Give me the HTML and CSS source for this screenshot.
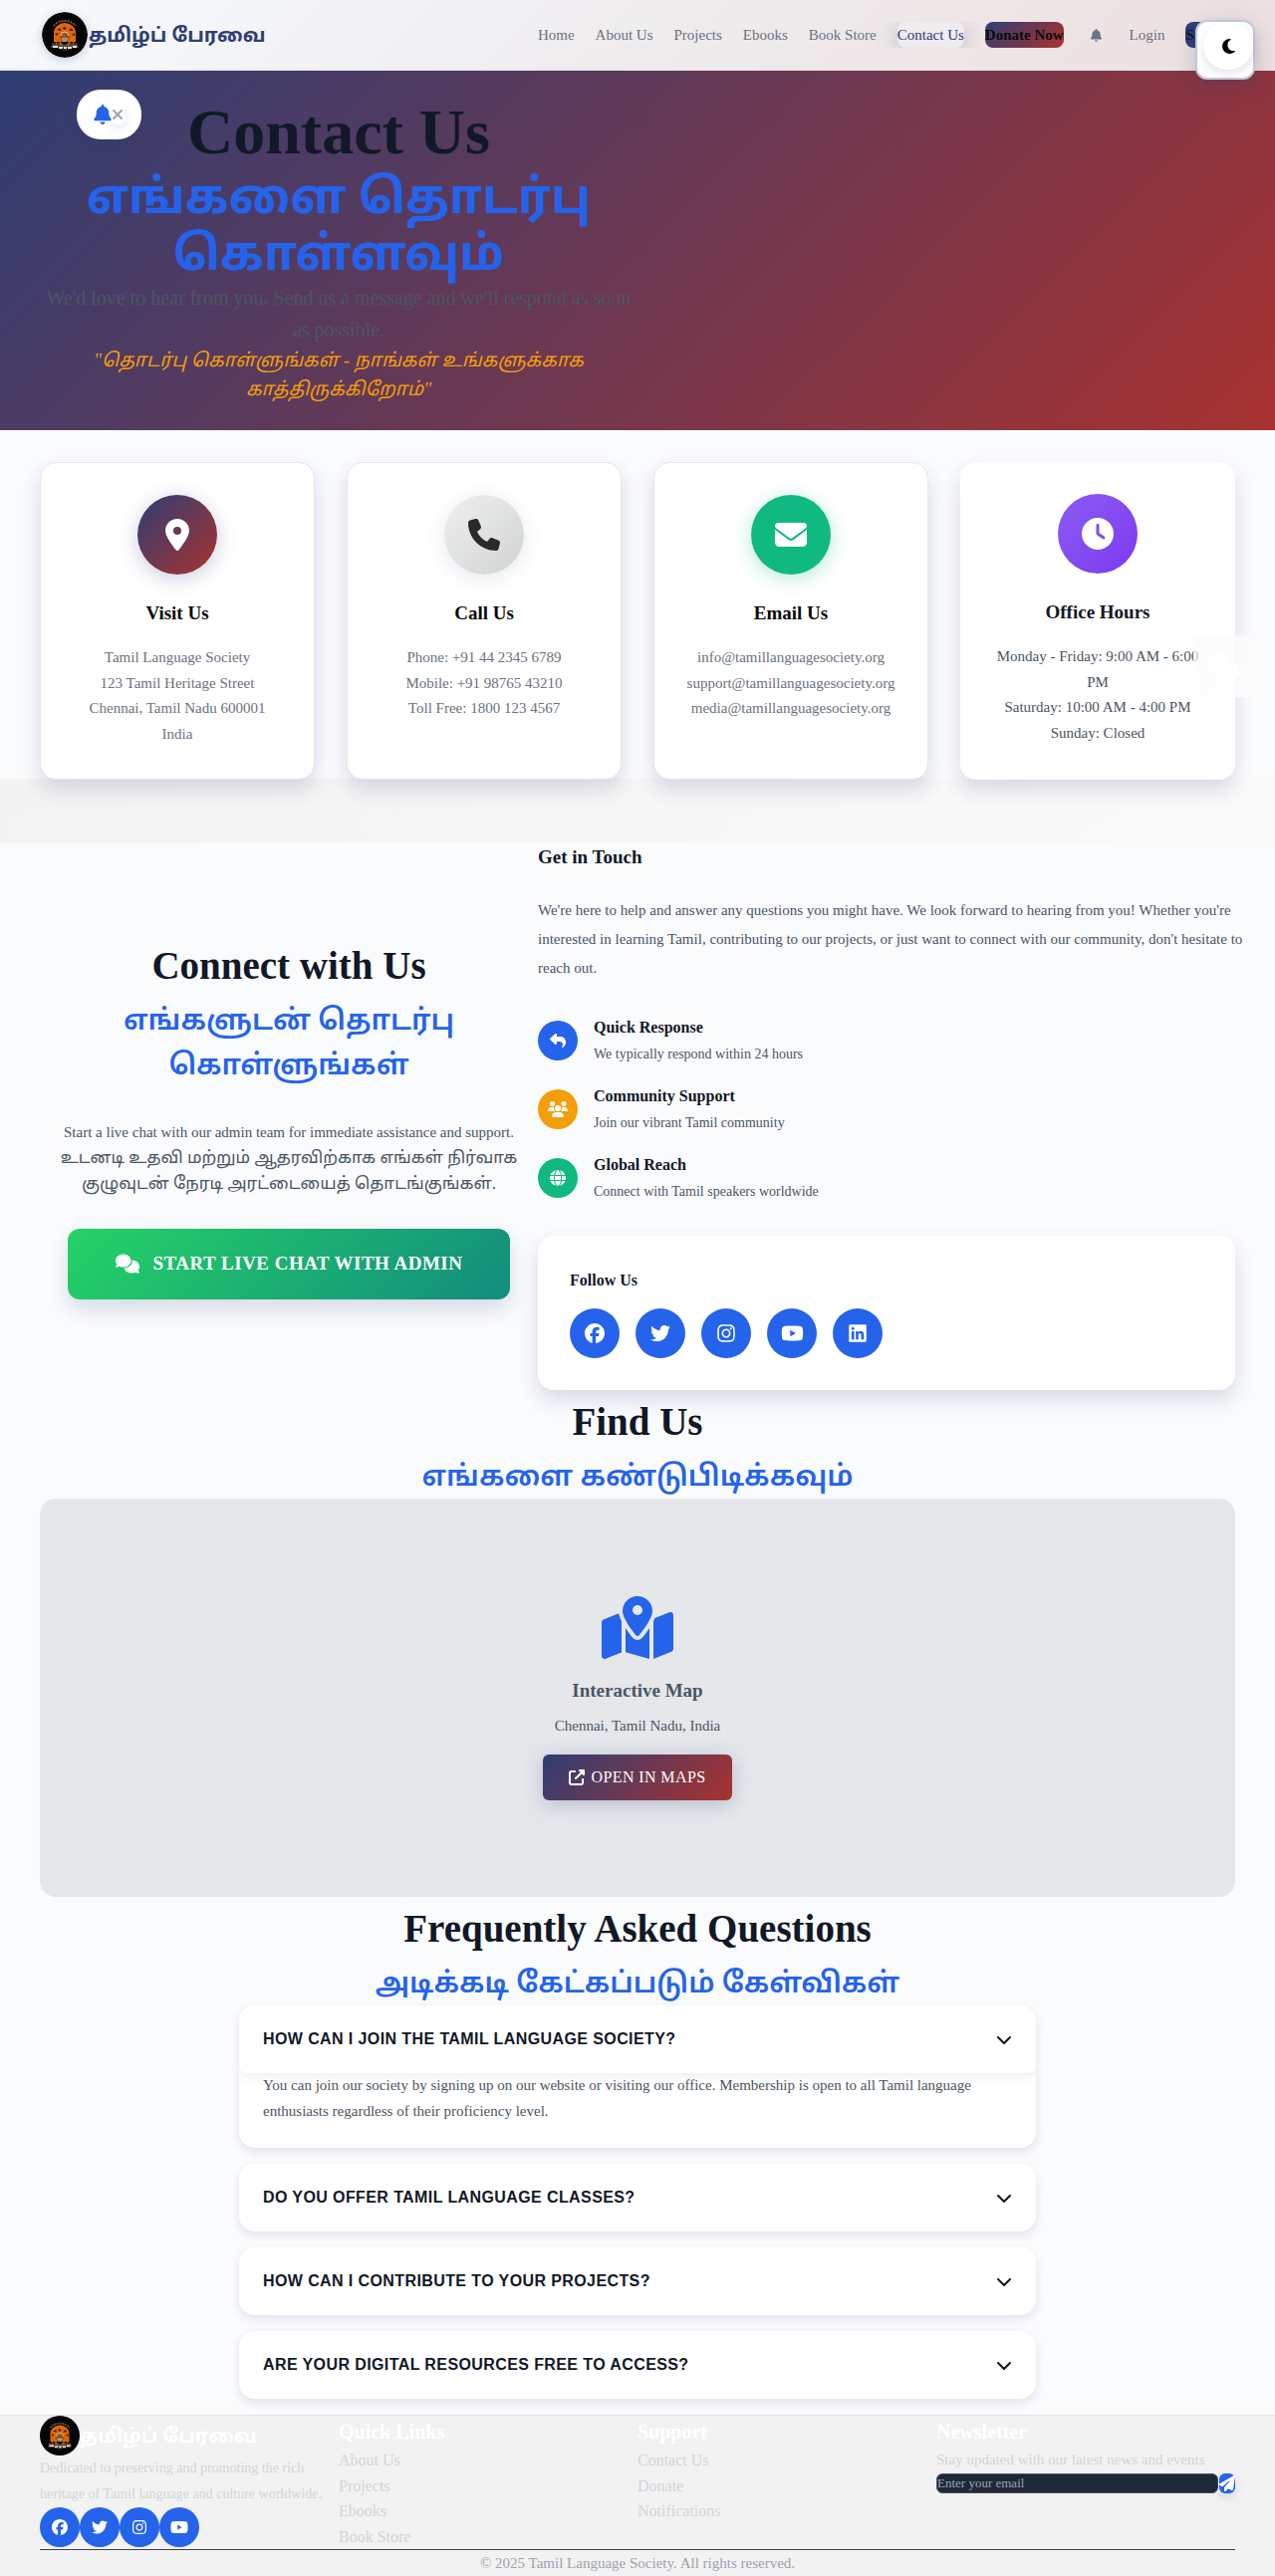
FILE: index.html
```html
<!DOCTYPE html>
<html lang="en">
<head>
<meta charset="utf-8">
<meta name="viewport" content="width=device-width, initial-scale=1">
<title>Contact Us - Tamil Language Society</title>
<link rel="stylesheet" href="styles.css">
</head>
<body>
<svg class="sprite" aria-hidden="true">
  <symbol id="bell" viewBox="0 0 448 512"><path d="M224 0c-17.7 0-32 14.3-32 32V51.2C119 66 64 130.6 64 208v18.8c0 47-17.3 92.4-48.5 127.6l-7.4 8.3c-8.4 9.4-10.4 22.9-5.3 34.4S19.4 416 32 416H416c12.6 0 24-7.4 29.2-18.9s3.1-25-5.3-34.4l-7.4-8.3C401.3 319.2 384 273.9 384 226.8V208c0-77.4-55-142-128-156.8V32c0-17.7-14.3-32-32-32zm45.3 493.3c12-12 18.7-28.3 18.7-45.3H224 160c0 17 6.7 33.3 18.7 45.3s28.3 18.7 45.3 18.7s33.3-6.7 45.3-18.7z"/></symbol>
  <symbol id="times" viewBox="0 0 384 512"><path d="M342.6 150.6c12.5-12.5 12.5-32.8 0-45.3s-32.8-12.5-45.3 0L192 210.7 86.6 105.4c-12.5-12.5-32.8-12.5-45.3 0s-12.5 32.8 0 45.3L146.7 256 41.4 361.4c-12.5 12.5-12.5 32.8 0 45.3s32.8 12.5 45.3 0L192 301.3 297.4 406.6c12.5 12.5 32.8 12.5 45.3 0s12.5-32.8 0-45.3L237.3 256 342.6 150.6z"/></symbol>
  <symbol id="moon" viewBox="0 0 384 512"><path d="M223.5 32C100 32 0 132.3 0 256S100 480 223.5 480c60.6 0 115.5-24.2 155.8-63.4c5-4.9 6.3-12.5 3.1-18.7s-10.1-9.7-17-8.5c-9.8 1.7-19.8 2.6-30.1 2.6c-96.9 0-175.5-78.8-175.5-176c0-65.8 36-123.1 89.3-153.3c6.1-3.5 9.2-10.5 7.7-17.3s-7.3-11.9-14.3-12.5c-6.3-.5-12.6-.8-19-.8z"/></symbol>
  <symbol id="pin" viewBox="0 0 384 512"><path d="M215.7 499.2C267 435 384 279.4 384 192C384 86 298 0 192 0S0 86 0 192c0 87.4 117 243 168.3 307.2c12.3 15.3 35.1 15.3 47.4 0zM192 128a64 64 0 1 1 0 128 64 64 0 1 1 0-128z"/></symbol>
  <symbol id="phone" viewBox="0 0 512 512"><path d="M164.9 24.6c-7.7-18.6-28-28.5-47.4-23.2l-88 24C12.1 30.2 0 46 0 64C0 311.4 200.6 512 448 512c18 0 33.8-12.1 38.6-29.5l24-88c5.3-19.4-4.6-39.7-23.2-47.4l-96-40c-16.3-6.8-35.2-2.1-46.3 11.6L304.7 368C234.3 334.7 177.3 277.7 144 207.3L193.3 167c13.7-11.2 18.4-30 11.6-46.3l-40-96z"/></symbol>
  <symbol id="envelope" viewBox="0 0 512 512"><path d="M48 64C21.5 64 0 85.5 0 112c0 15.1 7.1 29.3 19.2 38.4L236.8 313.6c11.4 8.5 27 8.5 38.4 0L492.8 150.4c12.1-9.1 19.2-23.3 19.2-38.4c0-26.5-21.5-48-48-48H48zM0 176V384c0 35.3 28.7 64 64 64H448c35.3 0 64-28.7 64-64V176L294.4 339.2c-22.8 17.1-54 17.1-76.8 0L0 176z"/></symbol>
  <symbol id="clock" viewBox="0 0 512 512"><path d="M256 0a256 256 0 1 1 0 512A256 256 0 1 1 256 0zM232 120V256c0 8 4 15.5 10.7 20l96 64c11 7.4 25.9 4.4 33.3-6.7s4.4-25.9-6.7-33.3L280 243.2V120c0-13.3-10.7-24-24-24s-24 10.7-24 24z"/></symbol>
  <symbol id="comments" viewBox="0 0 640 512"><path d="M208 352c114.9 0 208-78.8 208-176S322.9 0 208 0S0 78.8 0 176c0 38.6 14.7 74.3 39.6 103.4c-3.5 9.4-8.7 17.7-14.2 24.7c-4.8 6.2-9.7 11-13.3 14.3c-1.8 1.6-3.3 2.9-4.3 3.7c-.5 .4-.9 .7-1.1 .8l-.2 .2C1 327.2-1.4 334.4 .8 340.9S9.1 352 16 352c21.8 0 43.8-5.6 62.1-12.5c9.2-3.5 17.8-7.4 25.2-11.4C134.1 343.3 169.8 352 208 352zM448 176c0 112.3-99.1 196.9-216.5 207C255.8 457.4 336.4 512 432 512c38.2 0 73.9-8.7 104.7-23.9c7.5 4 16 7.9 25.2 11.4c18.3 6.9 40.3 12.5 62.1 12.5c6.9 0 13.1-4.5 15.2-11.1c2.1-6.6-.2-13.8-5.8-17.9l-.2-.2c-.2-.2-.6-.4-1.1-.8c-1-.8-2.5-2-4.3-3.7c-3.6-3.3-8.5-8.1-13.3-14.3c-5.5-7-10.7-15.4-14.2-24.7c24.9-29 39.6-64.7 39.6-103.4c0-92.8-84.9-168.9-192.6-175.5c.4 5.1 .6 10.3 .6 15.5z"/></symbol>
  <symbol id="reply" viewBox="0 0 512 512"><path d="M205 34.8c11.5 5.1 19 16.6 19 29.2v64H336c97.2 0 176 78.8 176 176c0 113.3-81.5 163.9-100.2 174.1c-2.5 1.4-5.3 1.9-8.1 1.9c-10.9 0-19.7-8.9-19.7-19.7c0-7.5 4.3-14.4 9.8-19.5c9.4-8.8 22.2-26.4 22.2-56.7c0-53-43-96-96-96H224v64c0 12.6-7.4 24.1-19 29.2s-25 3-34.4-5.4l-160-144C3.9 225.7 0 217.1 0 208s3.9-17.7 10.6-23.8l160-144c9.4-8.5 22.9-10.6 34.4-5.4z"/></symbol>
  <symbol id="users" viewBox="0 0 640 512"><path d="M144 0a80 80 0 1 1 0 160A80 80 0 1 1 144 0zM512 0a80 80 0 1 1 0 160A80 80 0 1 1 512 0zM0 298.7C0 239.8 47.8 192 106.7 192h42.7c15.9 0 31 3.5 44.6 9.7c-1.3 7.2-1.9 14.7-1.9 22.3c0 38.2 16.8 72.5 43.3 96c-.2 0-.4 0-.7 0H21.3C9.6 320 0 310.4 0 298.7zM405.3 320c-.2 0-.4 0-.7 0c26.6-23.5 43.3-57.8 43.3-96c0-7.6-.7-15-1.9-22.3c13.6-6.3 28.7-9.7 44.6-9.7h42.7C592.2 192 640 239.8 640 298.7c0 11.8-9.6 21.3-21.3 21.3H405.3zM224 224a96 96 0 1 1 192 0 96 96 0 1 1 -192 0zM128 485.3C128 411.7 187.7 352 261.3 352H378.7C452.3 352 512 411.7 512 485.3c0 14.7-11.9 26.7-26.7 26.7H154.7c-14.7 0-26.7-11.9-26.7-26.7z"/></symbol>
  <symbol id="globe" viewBox="0 0 512 512"><path d="M352 256c0 22.2-1.2 43.6-3.3 64H163.3c-2.2-20.4-3.3-41.8-3.3-64s1.2-43.6 3.3-64H348.7c2.2 20.4 3.3 41.8 3.3 64zm28.8-64H503.9c5.3 20.5 8.1 41.9 8.1 64s-2.8 43.5-8.1 64H380.8c2.1-20.6 3.2-42 3.2-64s-1.1-43.4-3.2-64zm112.6-32H376.7c-10-63.9-29.8-117.4-55.3-151.6c78.3 20.7 142 77.5 171.9 151.6zm-149.1 0H167.7c6.1-36.4 15.5-68.6 27-94.7c10.5-23.6 22.2-40.7 33.5-51.5C239.4 3.2 248.7 0 256 0s16.6 3.2 27.8 13.8c11.3 10.8 23 27.9 33.5 51.5c11.6 26 20.9 58.2 27 94.7zm-209 0H18.6C48.6 85.9 112.2 29.1 190.6 8.4C165.1 42.6 145.3 96.1 135.3 160zM8.1 192H131.2c-2.1 20.6-3.2 42-3.2 64s1.1 43.4 3.2 64H8.1C2.8 299.5 0 278.1 0 256s2.8-43.5 8.1-64zM194.7 446.6c-11.6-26-20.9-58.2-27-94.6H344.3c-6.1 36.4-15.5 68.6-27 94.6c-10.5 23.6-22.2 40.7-33.5 51.5C272.6 508.8 263.3 512 256 512s-16.6-3.2-27.8-13.8c-11.3-10.8-23-27.9-33.5-51.5zM135.3 352c10 63.9 29.8 117.4 55.3 151.6C112.2 482.9 48.6 426.1 18.6 352H135.3zm358.1 0c-30 74.1-93.6 130.9-171.9 151.6c25.5-34.2 45.2-87.7 55.3-151.6H493.4z"/></symbol>
  <symbol id="facebook" viewBox="0 0 512 512"><path d="M512 256C512 114.6 397.4 0 256 0S0 114.6 0 256C0 376 82.7 476.8 194.2 504.5V334.2H141.4V256h52.8V222.3c0-87.1 39.4-127.5 125-127.5c16.2 0 44.2 3.2 55.7 6.4V172c-6-.6-16.5-1-29.6-1c-42 0-58.2 15.9-58.2 57.2V256h83.6l-14.4 78.2H287V510.1C413.8 494.8 512 386.9 512 256h0z"/></symbol>
  <symbol id="twitter" viewBox="0 0 512 512"><path d="M459.37 151.716c.325 4.548.325 9.097.325 13.645 0 138.72-105.583 298.558-298.558 298.558-59.452 0-114.68-17.219-161.137-47.106 8.447.974 16.568 1.299 25.34 1.299 49.055 0 94.213-16.568 130.274-44.832-46.132-.975-84.792-31.188-98.112-72.772 6.498.974 12.995 1.624 19.818 1.624 9.421 0 18.843-1.3 27.614-3.573-48.081-9.747-84.143-51.98-84.143-102.985v-1.299c13.969 7.797 30.214 12.67 47.431 13.319-28.264-18.843-46.781-51.005-46.781-87.391 0-19.492 5.197-37.36 14.294-52.954 51.655 63.675 129.3 105.258 216.365 109.807-1.624-7.797-2.599-15.918-2.599-24.04 0-57.828 46.782-104.934 104.934-104.934 30.213 0 57.502 12.67 76.67 33.137 23.715-4.548 46.456-13.32 66.599-25.34-7.798 24.366-24.366 44.833-46.132 57.827 21.117-2.273 41.584-8.122 60.426-16.243-14.292 20.791-32.161 39.308-52.628 54.253z"/></symbol>
  <symbol id="instagram" viewBox="0 0 448 512"><path d="M224.1 141c-63.6 0-114.9 51.3-114.9 114.9s51.3 114.9 114.9 114.9S339 319.5 339 255.9 287.7 141 224.1 141zm0 189.6c-41.1 0-74.7-33.5-74.7-74.7s33.5-74.7 74.7-74.7 74.7 33.5 74.7 74.7-33.6 74.7-74.7 74.7zm146.4-194.3c0 14.9-12 26.8-26.8 26.8-14.9 0-26.8-12-26.8-26.8s12-26.8 26.8-26.8 26.8 12 26.8 26.8zm76.1 27.2c-1.7-35.9-9.9-67.7-36.2-93.9-26.2-26.2-58-34.4-93.9-36.2-37-2.1-147.9-2.1-184.9 0-35.8 1.7-67.6 9.9-93.9 36.1s-34.4 58-36.2 93.9c-2.1 37-2.1 147.9 0 184.9 1.7 35.9 9.9 67.7 36.2 93.9s58 34.4 93.9 36.2c37 2.1 147.9 2.1 184.9 0 35.9-1.7 67.7-9.9 93.9-36.2 26.2-26.2 34.4-58 36.2-93.9 2.1-37 2.1-147.8 0-184.8zM398.8 388c-7.8 19.6-22.9 34.7-42.6 42.6-29.5 11.7-99.5 9-132.1 9s-102.7 2.6-132.1-9c-19.6-7.8-34.7-22.9-42.6-42.6-11.7-29.5-9-99.5-9-132.1s-2.6-102.7 9-132.1c7.8-19.6 22.9-34.7 42.6-42.6 29.5-11.7 99.5-9 132.1-9s102.7-2.6 132.1 9c19.6 7.8 34.7 22.9 42.6 42.6 11.7 29.5 9 99.5 9 132.1s2.7 102.7-9 132.1z"/></symbol>
  <symbol id="youtube" viewBox="0 0 576 512"><path d="M549.655 124.083c-6.281-23.65-24.787-42.276-48.284-48.597C458.781 64 288 64 288 64S117.22 64 74.629 75.486c-23.497 6.322-42.003 24.947-48.284 48.597-11.412 42.867-11.412 132.305-11.412 132.305s0 89.438 11.412 132.305c6.281 23.65 24.787 41.5 48.284 47.821C117.22 448 288 448 288 448s170.78 0 213.371-11.486c23.497-6.321 42.003-24.171 48.284-47.821 11.412-42.867 11.412-132.305 11.412-132.305s0-89.438-11.412-132.305zm-317.51 213.508V175.185l142.739 81.205-142.739 81.201z"/></symbol>
  <symbol id="linkedin" viewBox="0 0 448 512"><path d="M416 32H31.9C14.3 32 0 46.5 0 64.3v383.4C0 465.5 14.3 480 31.9 480H416c17.6 0 32-14.5 32-32.3V64.3c0-17.8-14.4-32.3-32-32.3zM135.4 416H69V202.2h66.5V416zm-33.2-243c-21.3 0-38.5-17.3-38.5-38.5S80.9 96 102.2 96c21.2 0 38.5 17.3 38.5 38.5 0 21.3-17.2 38.5-38.5 38.5zm282.1 243h-66.4V312c0-24.8-.5-56.7-34.5-56.7-34.6 0-39.9 27-39.9 54.9V416h-66.4V202.2h63.7v29.2h.9c8.9-16.8 30.6-34.5 62.9-34.5 67.2 0 79.7 44.3 79.7 101.9V416z"/></symbol>
  <symbol id="map" viewBox="0 0 576 512"><path d="M408 120c0 54.6-73.1 151.9-105.2 192c-7.7 9.6-22 9.6-29.6 0C241.1 271.9 168 174.6 168 120C168 53.7 221.7 0 288 0s120 53.7 120 120zm8 80.4c3.5-6.9 6.7-13.8 9.6-20.6c.5-1.2 1-2.5 1.5-3.7l116-46.4C558.9 123.4 576 135 576 152V422.8c0 9.8-6 18.6-15.1 22.3L416 503V200.4zM137.6 138.3c2.4 14.1 7.2 28.3 12.8 41.5c2.9 6.8 6.1 13.7 9.6 20.6V451.8L32.9 502.7C17.1 509 0 497.4 0 480.4V209.6c0-9.8 6-18.6 15.1-22.3l122.6-49zM327.8 332c13.9-17.4 35.7-45.7 56.2-77V504.3L192 449.4V255c20.5 31.3 42.3 59.6 56.2 77c20.5 25.6 59.1 25.6 79.6 0zM288 152a40 40 0 1 0 0-80 40 40 0 1 0 0 80z"/></symbol>
  <symbol id="external" viewBox="0 0 512 512"><path d="M352 0c-12.9 0-24.6 7.8-29.6 19.8s-2.2 25.7 6.9 34.9L370.7 96 201.4 265.4c-12.5 12.5-12.5 32.8 0 45.3s32.8 12.5 45.3 0L416 141.3l41.4 41.4c9.2 9.2 22.9 11.9 34.9 6.9s19.8-16.6 19.8-29.6V32c0-17.7-14.3-32-32-32H352zM80 32C35.8 32 0 67.8 0 112V432c0 44.2 35.8 80 80 80H400c44.2 0 80-35.8 80-80V320c0-17.7-14.3-32-32-32s-32 14.3-32 32V432c0 8.8-7.2 16-16 16H80c-8.8 0-16-7.2-16-16V112c0-8.8 7.2-16 16-16H192c17.7 0 32-14.3 32-32s-14.3-32-32-32H80z"/></symbol>
  <symbol id="chevron" viewBox="0 0 512 512"><path d="M233.4 406.6c12.5 12.5 32.8 12.5 45.3 0l192-192c12.5-12.5 12.5-32.8 0-45.3s-32.8-12.5-45.3 0L256 338.7 86.6 169.4c-12.5-12.5-32.8-12.5-45.3 0s-12.5 32.8 0 45.3l192 192z"/></symbol>
  <symbol id="plane" viewBox="0 0 512 512"><path d="M498.1 5.6c10.1 7 15.4 19.1 13.5 31.2l-64 416c-1.5 9.7-7.4 18.2-16 23s-18.9 5.4-28 1.6L284 427.7l-68.5 74.1c-8.9 9.7-22.9 12.9-35.2 8.1S160 493.2 160 480V396.4c0-4 1.5-7.8 4.2-10.7L331.8 202.8c5.8-6.3 5.6-16-.4-22s-15.7-6.4-22-.7L106 360.8 17.7 316.6C7.1 311.3 .3 300.7 0 288.9s5.9-22.8 16.1-28.7l448-256c10.7-6.1 23.9-5.5 34 1.4z"/></symbol>
  <symbol id="emblem" viewBox="0 0 46 46">
    <circle cx="23" cy="23" r="23" fill="#050505"/>
    <path d="M12 30V21a11 10 0 0 1 22 0v9z" fill="#e0660a"/>
    <path d="M12 14a13 11 0 0 1 22 0" fill="none" stroke="#6a5e56" stroke-width="2" stroke-dasharray="2 1"/>
    <path d="M15 18l4-2 0 3zM27 19l2-3 3 3zM22 15l3 1-2 2-2-1zM13 22l4-1-2 3zM30 23l3-2 0 3z" fill="#3a1c08"/>
    <circle cx="23" cy="25" r="5" fill="#8a5526"/>
    <path d="M19 24a4 4 0 0 1 8 0M20 27h6M21 29h4" fill="none" stroke="#f0c896" stroke-width="1"/>
    <path d="M9 36l2-5 4 2 3-3 5 3 5-3 3 3 4-2 2 5z" fill="#5c4430"/>
    <path d="M13 28l2 5M33 28l-2 5M18 30l2 4M28 30l-2 4" stroke="#d07a30" stroke-width="1"/>
    <path d="M11 34h5v2h-5zM17 35h4v2h-4zM22 35h3v2h-3zM26 35h4v2h-4zM31 34h4v2h-4z" fill="#e8e4e0"/>
    <path d="M21 38h4" stroke="#8a5526" stroke-width="1"/>
  </symbol>
</svg>

<header class="site-header">
  <div class="container header-row">
    <a class="brand" href="#"><svg class="brand-logo"><use href="#emblem"/></svg><span>தமிழ்ப் பேரவை</span></a>
    <nav aria-label="Main">
      <ul class="nav-list">
        <li><a href="#">Home</a></li>
        <li><a href="#">About Us</a></li>
        <li><a href="#">Projects</a></li>
        <li><a href="#">Ebooks</a></li>
        <li><a href="#">Book Store</a></li>
        <li><a class="current" href="#" aria-current="page">Contact Us</a></li>
        <li><a class="donate" href="#">Donate Now</a></li>
        <li><a class="nav-bell" href="#" aria-label="Notifications"><svg class="icon"><use href="#bell"/></svg></a></li>
        <li><a href="#">Login</a></li>
        <li><a class="signup" href="#">Sign Up</a></li>
      </ul>
    </nav>
  </div>
</header>

<div class="notify-box">
  <svg class="icon"><use href="#bell"/></svg>
  <button class="notify-close" type="button" aria-label="Dismiss"><svg class="icon"><use href="#times"/></svg></button>
</div>
<div class="theme-box">
  <button class="theme-button" type="button" aria-label="Dark mode"><svg class="icon"><use href="#moon"/></svg></button>
</div>
<button class="chat-float" type="button" aria-label="Open chat"><svg class="icon"><use href="#comments"/></svg></button>

<main>
  <section class="hero">
    <div class="container">
      <div class="hero-text">
        <h1>Contact Us <span lang="ta">எங்களை தொடர்பு கொள்ளவும்</span></h1>
        <p class="hero-lead">We'd love to hear from you. Send us a message and we'll respond as soon as possible.</p>
        <p class="hero-quote" lang="ta">"தொடர்பு கொள்ளுங்கள் - நாங்கள் உங்களுக்காக காத்திருக்கிறோம்"</p>
      </div>
    </div>
  </section>

  <section class="cards-section">
    <div class="container cards">
      <article class="card">
        <div class="card-icon visit"><svg class="icon"><use href="#pin"/></svg></div>
        <h3>Visit Us</h3>
        <p>Tamil Language Society<br>123 Tamil Heritage Street<br>Chennai, Tamil Nadu 600001<br>India</p>
      </article>
      <article class="card">
        <div class="card-icon call"><svg class="icon"><use href="#phone"/></svg></div>
        <h3>Call Us</h3>
        <p>Phone: +91 44 2345 6789<br>Mobile: +91 98765 43210<br>Toll Free: 1800 123 4567</p>
      </article>
      <article class="card">
        <div class="card-icon email"><svg class="icon"><use href="#envelope"/></svg></div>
        <h3>Email Us</h3>
        <p>info@tamillanguagesociety.org<br>support@tamillanguagesociety.org<br>media@tamillanguagesociety.org</p>
      </article>
      <article class="card plain">
        <div class="card-icon hours"><svg class="icon"><use href="#clock"/></svg></div>
        <h3>Office Hours</h3>
        <p>Monday - Friday: 9:00 AM - 6:00 PM<br>Saturday: 10:00 AM - 4:00 PM<br>Sunday: Closed</p>
      </article>
    </div>
  </section>

  <section class="container connect">
    <div class="connect-chat">
      <h2>Connect with Us</h2>
      <p class="tamil-title" lang="ta">எங்களுடன் தொடர்பு கொள்ளுங்கள்</p>
      <p class="chat-text">Start a live chat with our admin team for immediate assistance and support.<br><span lang="ta">உடனடி உதவி மற்றும் ஆதரவிற்காக எங்கள் நிர்வாக குழுவுடன் நேரடி அரட்டையைத் தொடங்குங்கள்.</span></p>
      <button class="chat-button" type="button"><svg class="icon"><use href="#comments"/></svg>Start Live Chat with Admin</button>
    </div>
    <div class="touch">
      <h3>Get in Touch</h3>
      <p class="touch-text">We're here to help and answer any questions you might have. We look forward to hearing from you! Whether you're interested in learning Tamil, contributing to our projects, or just want to connect with our community, don't hesitate to reach out.</p>
      <ul class="features">
        <li><span class="dot blue"><svg class="icon"><use href="#reply"/></svg></span><div><h4>Quick Response</h4><p>We typically respond within 24 hours</p></div></li>
        <li><span class="dot amber"><svg class="icon wide"><use href="#users"/></svg></span><div><h4>Community Support</h4><p>Join our vibrant Tamil community</p></div></li>
        <li><span class="dot green"><svg class="icon"><use href="#globe"/></svg></span><div><h4>Global Reach</h4><p>Connect with Tamil speakers worldwide</p></div></li>
      </ul>
      <div class="follow">
        <h4>Follow Us</h4>
        <div class="social">
          <a href="#" aria-label="Facebook"><svg class="icon"><use href="#facebook"/></svg></a>
          <a href="#" aria-label="Twitter"><svg class="icon"><use href="#twitter"/></svg></a>
          <a href="#" aria-label="Instagram"><svg class="icon"><use href="#instagram"/></svg></a>
          <a href="#" aria-label="YouTube"><svg class="icon wide"><use href="#youtube"/></svg></a>
          <a href="#" aria-label="LinkedIn"><svg class="icon"><use href="#linkedin"/></svg></a>
        </div>
      </div>
    </div>
  </section>

  <section class="container find">
    <h2>Find Us</h2>
    <p class="tamil-title" lang="ta">எங்களை கண்டுபிடிக்கவும்</p>
    <div class="map-box">
      <svg class="map-icon"><use href="#map"/></svg>
      <h3>Interactive Map</h3>
      <p>Chennai, Tamil Nadu, India</p>
      <a class="map-button" href="#"><svg class="icon"><use href="#external"/></svg>Open in Maps</a>
    </div>
  </section>

  <section class="container faq">
    <h2>Frequently Asked Questions</h2>
    <p class="tamil-title" lang="ta">அடிக்கடி கேட்கப்படும் கேள்விகள்</p>
    <div class="faq-list">
      <div class="faq-item">
        <button type="button" aria-expanded="true">How can I join the Tamil Language Society?<svg class="icon"><use href="#chevron"/></svg></button>
        <p>You can join our society by signing up on our website or visiting our office. Membership is open to all Tamil language enthusiasts regardless of their proficiency level.</p>
      </div>
      <div class="faq-item"><button type="button" aria-expanded="false">Do you offer Tamil language classes?<svg class="icon"><use href="#chevron"/></svg></button></div>
      <div class="faq-item"><button type="button" aria-expanded="false">How can I contribute to your projects?<svg class="icon"><use href="#chevron"/></svg></button></div>
      <div class="faq-item"><button type="button" aria-expanded="false">Are your digital resources free to access?<svg class="icon"><use href="#chevron"/></svg></button></div>
    </div>
  </section>
</main>

<footer class="site-footer">
  <div class="container">
    <div class="footer-cols">
      <div>
        <a class="footer-brand" href="#"><svg><use href="#emblem"/></svg><span>தமிழ்ப் பேரவை</span></a>
        <p class="footer-about">Dedicated to preserving and promoting the rich heritage of Tamil language and culture worldwide.</p>
        <div class="social small">
          <a href="#" aria-label="Facebook"><svg class="icon"><use href="#facebook"/></svg></a>
          <a href="#" aria-label="Twitter"><svg class="icon"><use href="#twitter"/></svg></a>
          <a href="#" aria-label="Instagram"><svg class="icon"><use href="#instagram"/></svg></a>
          <a href="#" aria-label="YouTube"><svg class="icon wide"><use href="#youtube"/></svg></a>
        </div>
      </div>
      <div>
        <h4>Quick Links</h4>
        <ul>
          <li><a href="#">About Us</a></li>
          <li><a href="#">Projects</a></li>
          <li><a href="#">Ebooks</a></li>
          <li><a href="#">Book Store</a></li>
        </ul>
      </div>
      <div>
        <h4>Support</h4>
        <ul>
          <li><a href="#">Contact Us</a></li>
          <li><a href="#">Donate</a></li>
          <li><a href="#">Notifications</a></li>
        </ul>
      </div>
      <div>
        <h4>Newsletter</h4>
        <p class="footer-text">Stay updated with our latest news and events</p>
        <form class="newsletter">
          <input type="email" placeholder="Enter your email" aria-label="Email address">
          <button type="button" aria-label="Subscribe"><svg class="icon"><use href="#plane"/></svg></button>
        </form>
      </div>
    </div>
    <p class="copyright">© 2025 Tamil Language Society. All rights reserved.</p>
  </div>
</footer>
</body>
</html>
```

FILE: styles.css
```css
:root {
  --navy: #2f3e74;
  --red: #a83230;
  --blue: #2563eb;
  --ink: #111827;
  --text: #4b5563;
  --muted: #6b7280;
  --brand-gradient: linear-gradient(135deg, var(--navy), var(--red));
  --shadow: 0 10px 20px rgba(45, 55, 110, 0.16);
}

* { box-sizing: border-box; margin: 0; padding: 0; }

body {
  position: relative;
  background: #fafbfd;
  color: var(--ink);
  font-family: "Liberation Serif", "Noto Sans Tamil", serif;
  font-size: 16px;
  line-height: 1.6;
}

a { color: inherit; text-decoration: none; }
ul { list-style: none; }
button { border: 0; font: inherit; color: inherit; cursor: pointer; }
.sprite { display: none; }
.icon { width: 1em; height: 1em; fill: currentColor; flex: none; }
.container { width: 100%; max-width: 1280px; margin: 0 auto; padding: 0 40px; }

/* Header */
.site-header {
  background: linear-gradient(135deg, #f6fafd, #efecee 50%, #ecdfdf);
  border-bottom: 1px solid #e0e4e6;
}
.header-row { display: flex; align-items: center; justify-content: space-between; height: 70px; }
.brand { display: flex; align-items: center; gap: 1px; padding-left: 2px; color: var(--navy); font-size: 20px; font-weight: 700; }
.brand-logo { width: 46px; height: 46px; border-radius: 50%; box-shadow: 0 2px 8px rgba(45, 62, 120, 0.25); }
.nav-list { display: flex; gap: 21px; overflow: hidden; color: var(--muted); font-size: 15px; line-height: 26px; white-space: nowrap; }
.nav-list a { display: block; border-radius: 8px; }
.nav-list .current { color: var(--navy); background: #efebee; box-shadow: 0 4px 20px rgba(45, 62, 120, 0.25); }
.nav-list .donate { background: var(--brand-gradient); color: #0a0a0a; font-weight: 700; }
.nav-list .signup { background: var(--navy); color: #0a0a0a; }
.nav-list .nav-bell { display: flex; width: 24px; height: 26px; align-items: center; justify-content: center; font-size: 13px; }

/* Floating controls */
.notify-box {
  position: absolute; top: 90px; left: 77px;
  display: flex; align-items: center; padding: 15px 17px; height: 50px;
  border-radius: 24px; background: #fff; color: var(--blue); font-size: 20px;
  box-shadow: 0 4px 12px rgba(0, 0, 0, 0.06);
}
.notify-box > .icon { width: 18px; height: 20px; }
.notify-close { display: flex; align-items: center; width: 13px; height: 20px; border-radius: 5px; background: #fff; color: #9ca3af; font-size: 16px; box-shadow: 0 4px 8px rgba(45, 62, 120, 0.12); }
.notify-close .icon { width: 12px; }
.theme-box {
  position: absolute; top: 20px; right: 20px; width: 60px; height: 60px;
  border: 2px solid #c3c7da; border-radius: 12px; background: #fff;
  box-shadow: 0 6px 20px rgba(45, 62, 120, 0.25);
}
.theme-button { display: grid; place-items: center; width: 50px; height: 48px; margin-left: 6px; border-radius: 50%; background: #fff; color: #000; font-size: 17px; box-shadow: 0 4px 10px rgba(45, 62, 120, 0.14); }
.chat-float {
  position: absolute; top: 638px; right: 20px; display: grid; place-items: center; width: 62px; height: 62px;
  background: linear-gradient(135deg, rgba(250, 250, 250, 0.6), rgba(253, 253, 254, 0.9)); color: #fff;
}
.chat-float .icon { width: 32px; height: 25px; }

/* Hero */
.hero { background: var(--brand-gradient); padding: 26px 0 27px; }
.hero-text { width: 50%; text-align: center; }
h1 { font-size: 64px; line-height: 72px; }
h1 span { display: block; color: var(--blue); font-size: 48px; line-height: 57px; }
.hero-lead { color: var(--text); font-size: 20px; line-height: 32px; }
.hero-quote { color: #f59e0b; font-size: 19px; font-style: italic; line-height: 29px; }

/* Contact cards */
.cards-section { background: linear-gradient(135deg, #f3f3f3, #fafafa) bottom / 100% 64px no-repeat; padding: 32px 0 63px; }
.cards { display: grid; grid-template-columns: repeat(4, 1fr); gap: 32px; }
.card { padding: 32px; border: 1px solid #e5e7eb; border-radius: 16px; background: #fff; box-shadow: var(--shadow); text-align: center; }
.card h3 { margin-bottom: 17px; color: #0a0a0a; font-size: 19px; line-height: 30px; }
.card p { color: var(--muted); font-size: 15px; line-height: 1.7; }
.card.plain { border: 0; }
.card.plain h3 { color: var(--ink); }
.card.plain p { color: var(--text); }
.card-icon { display: grid; place-items: center; width: 80px; height: 80px; margin: 0 auto 24px; border-radius: 50%; color: #fff; font-size: 32px; }
.visit { background: var(--brand-gradient); box-shadow: 0 4px 20px rgba(45, 62, 120, 0.25); }
.call { background: linear-gradient(135deg, #f0f0f0, #d0d2d2); box-shadow: 0 4px 20px rgba(45, 62, 120, 0.12); color: #2a2a2a; }
.email { background: #10b981; box-shadow: 0 4px 20px rgba(16, 185, 129, 0.3); }
.hours { background: linear-gradient(135deg, #8b5cf6, #7c3aed); }

/* Section titles */
h2 { font-size: 39px; line-height: 64px; text-align: center; }
.tamil-title { color: var(--blue); font-size: 29px; font-weight: 600; line-height: 45px; text-align: center; }

/* Connect */
.connect { display: grid; grid-template-columns: 5fr 7fr; align-items: center; }
.connect-chat { padding: 0 16px; text-align: center; }
.chat-text { margin: 32px 0; color: var(--text); font-size: 15px; line-height: 26px; }
.chat-text span { font-size: 17px; }
.chat-button {
  display: inline-flex; align-items: center; gap: 14px; height: 71px; padding: 0 48px;
  border-radius: 12px; background: linear-gradient(135deg, #25d366, #128c7e); color: #fff;
  font-size: 19px; font-weight: 700; letter-spacing: 0.025em; text-transform: uppercase; box-shadow: var(--shadow);
}
.chat-button .icon { width: 24px; height: 20px; }
.touch > h3 { margin-bottom: 24px; font-size: 19px; line-height: 30px; }
/* Lets the long lines hang slightly into the page gutter */
.touch-text { margin-right: -12px; color: var(--text); font-size: 15px; line-height: 29px; }
.features { display: grid; gap: 15px; margin: 31px 0 31px; }
.features li { display: flex; align-items: center; gap: 16px; }
.features h4 { line-height: 27px; }
.features p { color: var(--text); font-size: 14px; line-height: 27px; }
.dot { display: grid; place-items: center; width: 40px; height: 40px; border-radius: 50%; color: #fff; }
.icon.wide { width: 20px; }
.blue { background: var(--blue); }
.amber { background: #f59e0b; }
.green { background: #10b981; }
.follow { padding: 32px; border-radius: 16px; background: #fff; box-shadow: var(--shadow); }
.follow h4 { margin-bottom: 16px; line-height: 25px; }
.social { display: flex; gap: 16px; }
.social a { display: grid; place-items: center; width: 50px; height: 50px; border-radius: 50%; background: var(--blue); color: #fff; font-size: 20px; }
.social .wide { width: 23px; }

/* Map */
.map-box { display: flex; flex-direction: column; align-items: center; justify-content: center; height: 400px; border-radius: 16px; background: #e5e7eb; color: var(--text); }
.map-icon { width: 72px; height: 64px; margin-bottom: 16px; fill: var(--blue); }
.map-box h3 { margin-bottom: 8px; font-size: 19px; line-height: 29px; }
.map-box p { font-size: 15px; line-height: 26px; }
.map-button {
  display: flex; align-items: center; gap: 6px; height: 46px; margin-top: 16px; padding: 0 26px;
  border-radius: 6px; background: var(--brand-gradient); color: #fff; letter-spacing: 0.025em; text-transform: uppercase;
  box-shadow: 0 4px 20px rgba(45, 62, 120, 0.25);
}

/* FAQ */
.faq-list { display: grid; gap: 16px; max-width: 800px; margin: 0 auto; }
.faq-item { overflow: hidden; border-radius: 16px; background: #fff; box-shadow: 0 4px 10px rgba(45, 55, 110, 0.12); }
.faq-item button {
  display: flex; align-items: center; justify-content: space-between; width: 100%; height: 68px; padding: 0 24px;
  border-radius: 8px; background: #fff; font-family: "Liberation Sans", sans-serif; font-size: 16px; font-weight: 700;
  letter-spacing: 0.025em; text-align: left; text-transform: uppercase; box-shadow: 0 4px 10px rgba(45, 55, 110, 0.08);
}
.faq-item p { padding: 0 24px 24px; color: var(--text); font-size: 15px; line-height: 1.7; }

/* Footer */
.site-footer { margin-top: 16px; border-top: 1px solid #e4e4e4; background: #f2f2f2; }
.footer-cols { display: grid; grid-template-columns: repeat(4, 1fr); color: #d1d5db; font-size: 15px; }
.footer-brand { display: flex; align-items: center; height: 40px; color: #fff; font-size: 20px; font-weight: 700; }
.footer-brand svg { width: 40px; height: 40px; }
.footer-cols h4 { color: #fff; font-size: 20px; line-height: 32px; }
.footer-cols li { font-size: 16px; }
.footer-text { font-size: 15px; line-height: 1.7; }
.footer-about { font-size: 14px; line-height: 26px; }
.small { gap: 0; }
.small a { width: 40px; height: 40px; font-size: 16px; }
.small .wide { width: 18px; }
.newsletter { display: flex; gap: 1px; }
.newsletter input { flex: 1; min-width: 0; height: 20px; border: 1px solid #4b5563; border-radius: 6px; background: #1f2937; color: #fff; font: 13px "Liberation Serif", serif; }
.newsletter input::placeholder { color: #9ca3af; }
.newsletter button { display: grid; place-items: center; width: 16px; height: 20px; border-radius: 6px; background: var(--blue); color: #fff; font-size: 16px; box-shadow: 0 4px 8px rgba(45, 62, 120, 0.15); }
.copyright { border-top: 1px solid #374151; color: #9ca3af; font-size: 15px; line-height: 26px; text-align: center; }
```
